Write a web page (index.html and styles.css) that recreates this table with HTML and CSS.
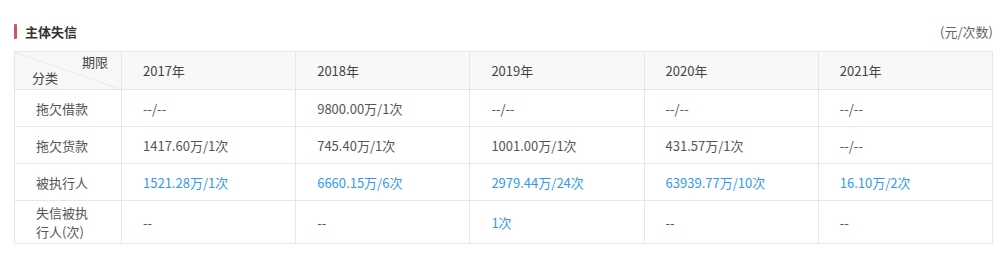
FILE: index.html
```html
<!DOCTYPE html>
<html lang="zh">
<head>
<meta charset="utf-8">
<title>主体失信</title>
<link rel="stylesheet" href="styles.css">
</head>
<body>
<section class="section">
  <div class="section-head">
    <h3 class="section-title"><span class="title-bar"></span>主体失信</h3>
    <span class="unit">(元/次数)</span>
  </div>
  <table class="credit-table">
    <colgroup>
      <col class="col-cat">
      <col><col><col><col><col>
    </colgroup>
    <thead>
      <tr>
        <th class="corner">
          <div class="corner-inner">
            <span class="corner-top">期限</span>
            <span class="corner-bottom">分类</span>
          </div>
        </th>
        <th>2017年</th>
        <th>2018年</th>
        <th>2019年</th>
        <th>2020年</th>
        <th>2021年</th>
      </tr>
    </thead>
    <tbody>
      <tr>
        <td class="cat">拖欠借款</td>
        <td>--/--</td>
        <td>9800.00万/1次</td>
        <td>--/--</td>
        <td>--/--</td>
        <td>--/--</td>
      </tr>
      <tr>
        <td class="cat">拖欠货款</td>
        <td>1417.60万/1次</td>
        <td>745.40万/1次</td>
        <td>1001.00万/1次</td>
        <td>431.57万/1次</td>
        <td>--/--</td>
      </tr>
      <tr>
        <td class="cat">被执行人</td>
        <td class="link">1521.28万/1次</td>
        <td class="link">6660.15万/6次</td>
        <td class="link">2979.44万/24次</td>
        <td class="link">63939.77万/10次</td>
        <td class="link">16.10万/2次</td>
      </tr>
      <tr>
        <td class="cat">失信被执行人(次)</td>
        <td>--</td>
        <td>--</td>
        <td class="link">1次</td>
        <td>--</td>
        <td>--</td>
      </tr>
    </tbody>
  </table>
</section>
</body>
</html>
```
FILE: styles.css
```css
html, body {
  margin: 0;
  padding: 0;
  background: #fff;
}
body {
  font-family: "Noto Sans CJK SC", "Noto Sans", sans-serif;
  font-size: 13px;
  color: #555;
}
.section {
  padding: 20px 14px 0 14px;
}
.section-head {
  display: flex;
  align-items: center;
  justify-content: space-between;
  height: 22px;
  margin-bottom: 9px;
}
.section-title {
  display: flex;
  align-items: center;
  margin: 0;
  font-size: 13px;
  font-weight: 700;
  color: #333;
}
.title-bar {
  display: inline-block;
  width: 3px;
  height: 15px;
  background: #d9535c;
  margin-right: 8px;
  border-radius: 1px;
}
.unit {
  font-size: 13px;
  color: #666;
}
.credit-table {
  width: 100%;
  border-collapse: collapse;
  table-layout: fixed;
  box-shadow: 0 1px 2px rgba(0, 0, 0, 0.04);
}
.col-cat {
  width: 107px;
}
.credit-table th,
.credit-table td {
  border: 1px solid #e6e6e6;
  text-align: left;
  vertical-align: middle;
  padding: 2px 21px;
  line-height: 19px;
  font-weight: 400;
}
.credit-table thead th {
  background: #f8f8f8;
  height: 33px;
  color: #444;
}
.credit-table td {
  height: 32px;
}
.credit-table td.link {
  color: #3399ee;
}
.credit-table th.corner {
  padding: 0;
  background-color: #f8f8f8;
  background-image: linear-gradient(to top right, transparent calc(50% - 0.6px), #dedede 50%, transparent calc(50% + 0.6px));
}
.corner-inner {
  display: flex;
  flex-direction: column;
  height: 37px;
  padding: 2px 13px 0 17px;
  box-sizing: border-box;
  line-height: 16px;
  color: #444;
}
.corner-top {
  align-self: flex-end;
}
.corner-bottom {
  align-self: flex-start;
}
```
